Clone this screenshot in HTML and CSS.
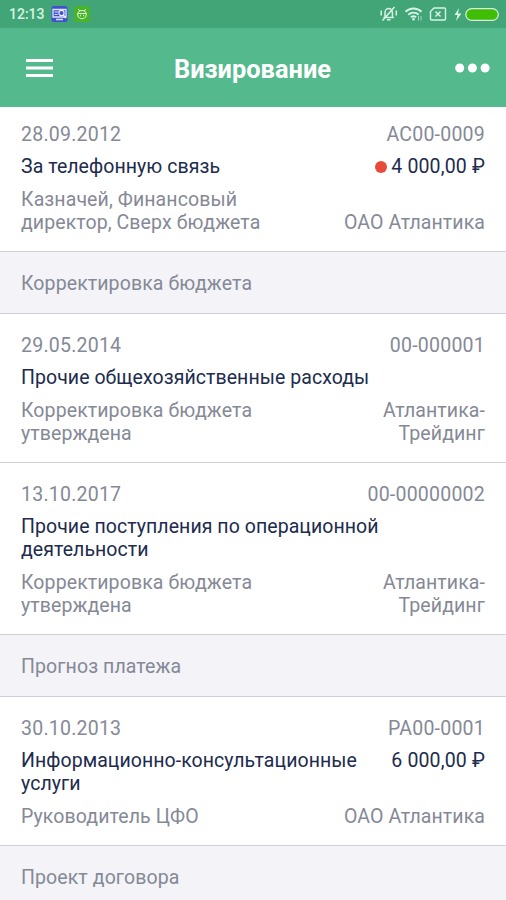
FILE: index.html
```html
<!DOCTYPE html>
<html lang="ru">
<head>
<meta charset="utf-8">
<title>Визирование</title>
<link rel="stylesheet" href="styles.css">
</head>
<body>
<div class="status">
  <span class="clock">12:13</span>
  <svg class="app-icon" width="17" height="16" viewBox="0 0 17 16">
    <rect x=".5" y="0" width="16" height="16" rx="2.5" fill="#3f50cc"/>
    <path d="M2 3.5h13v7.500h-13zM5 13.500h7" fill="none" stroke="#dce4ff" stroke-width="1.300"/>
    <path d="M3.500 6h4M3.500 8.500h3" stroke="#dce4ff" stroke-width="1"/>
    <circle cx="10.500" cy="7" r="2.600" fill="#3f50cc" stroke="#eef2ff" stroke-width="1.100"/>
    <path d="M12.300 9l2.500 3" stroke="#eef2ff" stroke-width="1.400"/>
  </svg>
  <svg class="app-icon second" width="16" height="16" viewBox="0 0 16 16">
    <rect width="16" height="16" rx="2.500" fill="#48b32d"/>
    <path d="M4.300 3l1.500 2M11.700 3l-1.500 2M3.700 7.500h8.600" stroke="#d9f5c8" stroke-width="1" fill="none"/>
    <path d="M3.700 8.500a4.300 4 0 0 1 8.600 0a4.300 4.200 0 0 1-8.600 0z" stroke="#d9f5c8" stroke-width="1.100" fill="none"/>
    <path d="M6 9.500h1M9 9.500h1" stroke="#d9f5c8" stroke-width="1.300"/>
  </svg>
  <svg class="signals" width="124" height="20" viewBox="0 0 124 20" fill="none" stroke="#d7f3e4">
    <path d="M3.500 13.500h10.500M5 13V8.500a3.700 4 0 0 1 7.400 0V13M7 15.800h3.500M1.200 6.500v5M16.300 6.500v5M14.500 3L2.500 16.500" stroke-width="1.500"/>
    <path d="M25.500 7.800a11.500 11.500 0 0 1 16 0M28.300 10.700a7.500 7.500 0 0 1 10.400 0M31 13.300a3.700 3.700 0 0 1 5 0" stroke-width="1.900"/>
    <circle cx="33.500" cy="15.300" r="1.300" fill="#d7f3e4" stroke="none"/>
    <path d="M38.500 12v4.500M41 12v4.500" stroke-width="1" opacity=".65"/>
    <path d="M54 4h10.500q1 0 1 1v10q0 1-1 1h-13q-1 0-1-1V7.500z" stroke-width="1.400"/>
    <path d="M55.500 7.500l5 5M60.500 7.500l-5 5" stroke-width="1.500"/>
    <path d="M79 4l-4.500 7h3l-1.500 6 5.500-7.500h-3.500z" fill="#d7f3e4" stroke="none"/>
    <rect x="85.800" y="4.600" width="32.500" height="11.800" rx="5.900" fill="#40bd05" stroke-width="1.200"/>
  </svg>
</div>
<header class="bar">
  <svg width="27" height="18" viewBox="0 0 27 18"><path d="M0 1.500h27M0 9h27M0 16.500h27" stroke="#fff" stroke-width="2.800"/></svg>
  <h1>Визирование</h1>
  <svg width="35" height="10" viewBox="0 0 35 10" fill="#fff"><circle cx="4.700" cy="5" r="4.500"/><circle cx="17.400" cy="5" r="4.500"/><circle cx="30.100" cy="5" r="4.500"/></svg>
</header>
<main>
  <article class="item first">
    <div class="row codes"><span>28.09.2012</span><span>АС00-0009</span></div>
    <div class="row title"><span>За телефонную связь</span><span class="sum"><i class="dot"></i>4 000,00 ₽</span></div>
    <div class="row last"><span>Казначей, Финансовый<br>директор, Сверх бюджета</span><span>ОАО Атлантика</span></div>
  </article>
  <h2>Корректировка бюджета</h2>
  <article class="item">
    <div class="row codes"><span>29.05.2014</span><span>00-000001</span></div>
    <div class="row title"><span>Прочие общехозяйственные расходы</span></div>
    <div class="row last"><span>Корректировка бюджета<br>утверждена</span><span>Атлантика-<br>Трейдинг</span></div>
  </article>
  <article class="item">
    <div class="row codes"><span>13.10.2017</span><span>00-00000002</span></div>
    <div class="row title"><span>Прочие поступления по операционной<br>деятельности</span></div>
    <div class="row last"><span>Корректировка бюджета<br>утверждена</span><span>Атлантика-<br>Трейдинг</span></div>
  </article>
  <h2>Прогноз платежа</h2>
  <article class="item">
    <div class="row codes"><span>30.10.2013</span><span>РА00-0001</span></div>
    <div class="row title"><span>Информационно-консультационные<br>услуги</span><span class="sum">6 000,00 ₽</span></div>
    <div class="row last"><span>Руководитель ЦФО</span><span>ОАО Атлантика</span></div>
  </article>
  <h2>Проект договора</h2>
</main>
</body>
</html>
```
FILE: styles.css
```css
* { box-sizing: border-box; }
body {
  margin: 0;
  height: 900px;
  overflow: hidden;
  background: #fff;
  font-family: Roboto, "Liberation Sans", sans-serif;
  font-size: 19.5px;
  line-height: 23px;
  letter-spacing: .1px;
  color: #858996;
}
svg { display: block; flex: none; }
.status {
  display: flex;
  align-items: center;
  height: 28px;
  padding: 0 2px 0 9px;
  background: #41a577;
}
.clock {
  width: 42px;
  font-size: 14px;
  font-weight: 500;
  letter-spacing: 0;
  color: #d7f3e4;
}
.second { margin-left: 6px; }
.signals { margin-left: auto; }
.bar {
  display: flex;
  align-items: center;
  justify-content: space-between;
  height: 79px;
  padding: 0 16px 0 26px;
  background: #55b98e;
}
h1 {
  margin: 3px 3px 0 0;
  font-size: 25.4px;
  font-weight: 700;
  letter-spacing: 0;
  color: #fff;
}
.item {
  padding: 19.5px 21px 17.25px;
  border-bottom: 1px solid #d0d0d6;
}
.first { padding-top: 15.75px; }
.row {
  display: flex;
  justify-content: space-between;
  align-items: flex-end;
  margin-bottom: 9.5px;
  white-space: nowrap;
}
.row span:nth-child(2) { text-align: right; }
.codes { letter-spacing: .23px; }
.title { align-items: flex-start; color: #202b4d; letter-spacing: .06px; }
.last { margin-bottom: 0; }
.sum { display: flex; align-items: center; gap: 4px; letter-spacing: .15px; }
.dot {
  width: 12px;
  height: 12px;
  border-radius: 50%;
  background: #e84b37;
}
h2 {
  margin: 0;
  height: 62.25px;
  padding: 20px 21px;
  border-bottom: 1px solid #d0d0d6;
  background: #f3f3f8;
  font-size: inherit;
  font-weight: 400;
}
```
